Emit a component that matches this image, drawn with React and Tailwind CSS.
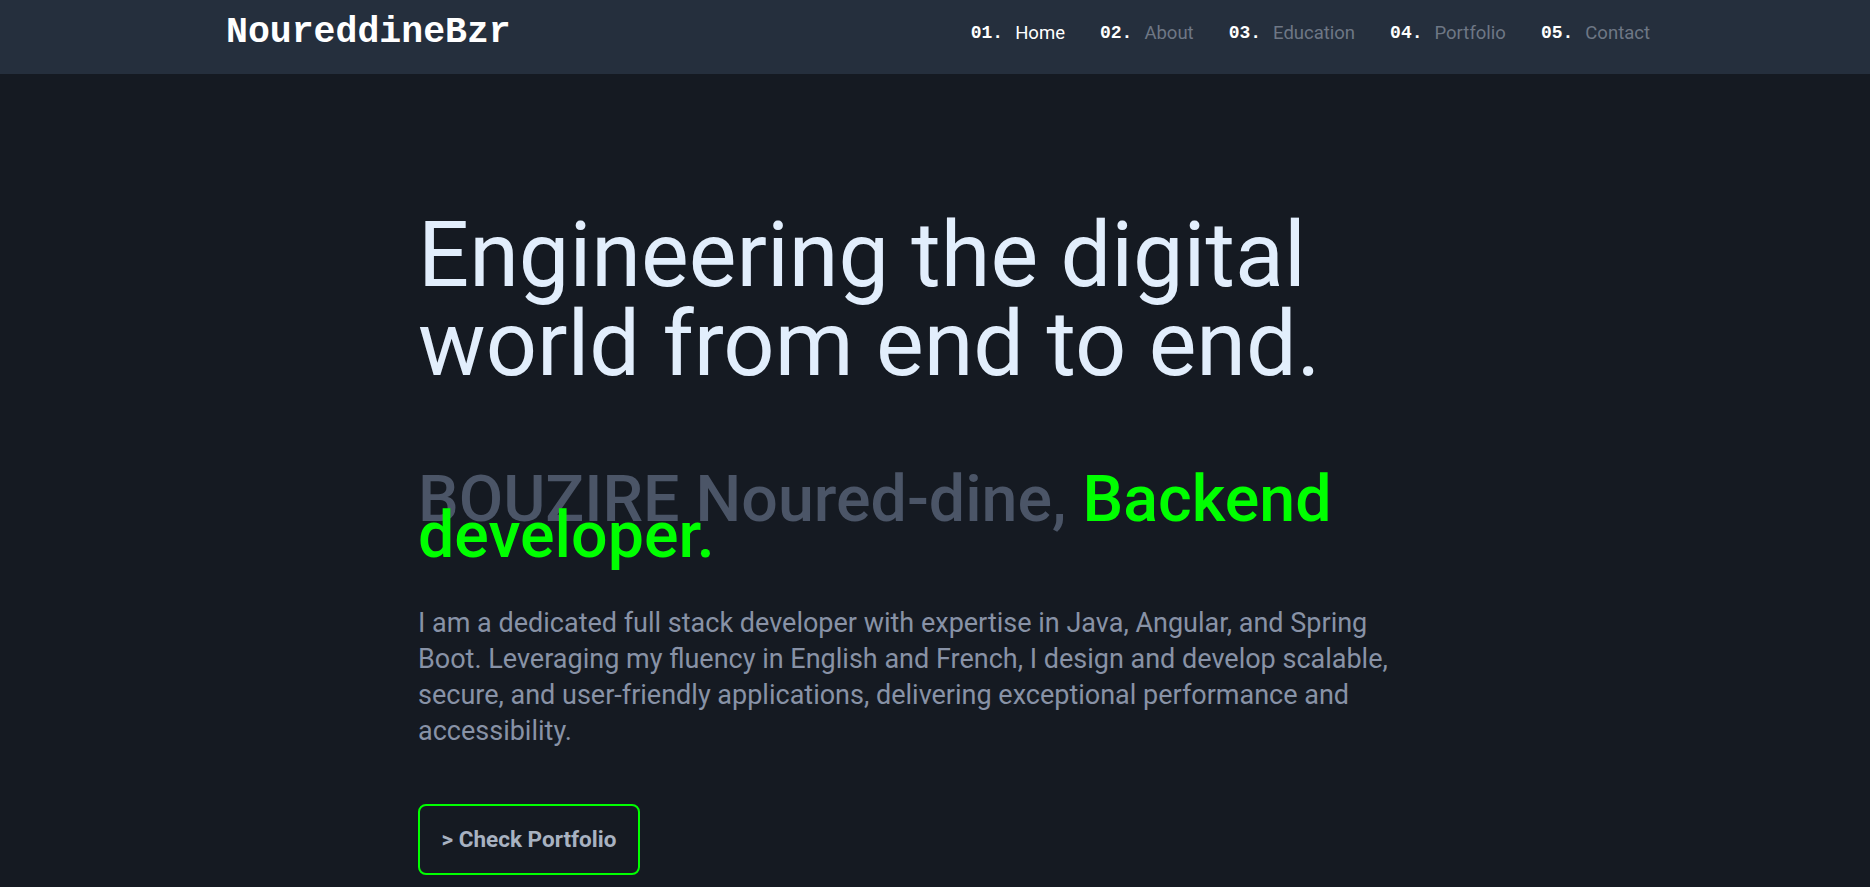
import React from "react";

const links = [
  { num: "01.", label: "Home", active: true },
  { num: "02.", label: "About" },
  { num: "03.", label: "Education" },
  { num: "04.", label: "Portfolio" },
  { num: "05.", label: "Contact" },
];

const Navbar = () => {
  return (
    <header className="h-[74px] bg-[#252f3d] flex items-center justify-between pl-[226px] pr-[220px] pb-[8px]">
      <a href="#" className="font-['Liberation_Mono',monospace] font-bold text-[36.5px] leading-none text-white">
        NoureddineBzr
      </a>
      <nav className="flex items-center gap-[35px]">
        {links.map((link, index) => (
          <a key={index} href="#" className="flex items-center leading-none">
            <span className="font-['Liberation_Mono',monospace] font-bold text-[18px] text-white mr-[12px]">
              {link.num}
            </span>
            <span
              className={
                link.active
                  ? "font-['Roboto',sans-serif] text-[18.5px] text-white"
                  : "font-['Roboto',sans-serif] text-[18.5px] text-[#6e7785]"
              }
            >
              {link.label}
            </span>
          </a>
        ))}
      </nav>
    </header>
  );
};

const Hero = () => {
  return (
    <section className="max-w-[1034px] mx-auto font-['Roboto',sans-serif]">
      <h1 className="pt-[137px] text-[90px] leading-[89px] font-normal text-[#e2eefc]">
        Engineering the digital world from end to end.
      </h1>
      <h2 className="mt-[92px] text-[64.5px] leading-[36px] font-medium text-[#4b5567]">
        BOUZIRE Noured-dine, <span className="text-[#00ff00]">Backend developer.</span>
      </h2>
      <p className="mt-[52px] max-w-[1000px] text-[27px] leading-[36px] text-[#8892a6]">
        I am a dedicated full stack developer with expertise in Java, Angular, and Spring Boot. Leveraging my fluency in
        English and French, I design and develop scalable, secure, and user-friendly applications, delivering exceptional
        performance and accessibility.
      </p>
      <button className="mt-[55px] h-[71px] w-[222px] border-2 border-[#00ff00] rounded-lg text-[22.5px] font-bold text-[#a8b2c1] flex items-center justify-center">
        &gt; Check Portfolio
      </button>
    </section>
  );
};

export default function App() {
  return (
    <div className="min-h-screen bg-[#151a22]">
      <Navbar />
      <Hero />
    </div>
  );
}
